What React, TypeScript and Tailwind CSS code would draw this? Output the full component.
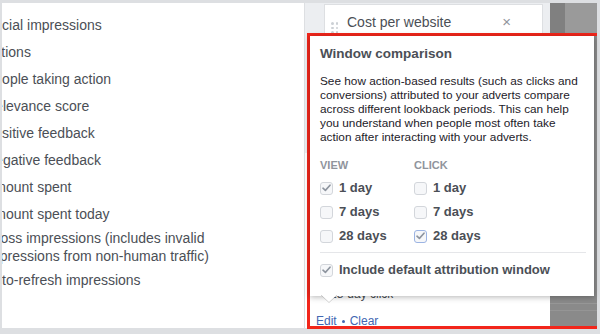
import React from 'react';

const leftItems = [
  'Social reach',
  'Social impressions',
  'Actions',
  'People taking action',
  'Relevance score',
  'Positive feedback',
  'Negative feedback',
  'Amount spent',
  'Amount spent today',
  'Gross impressions (includes invalid impressions from non-human traffic)',
  'Auto-refresh impressions',
];

const Check = () => (
  <svg width="9" height="8" viewBox="0 0 9 8" fill="none">
    <path d="M1 4.2 L3.4 6.4 L8 1.2" stroke="#8d949e" strokeWidth="1.6" strokeLinecap="round" strokeLinejoin="round" />
  </svg>
);

const Box = ({ checked, focus }: { checked?: boolean; focus?: boolean }) => (
  <span
    className={
      'flex h-[13px] w-[13px] shrink-0 items-center justify-center rounded-[3px] border bg-[#f6f7f9] ' +
      (focus ? 'border-[#9cb4e3]' : 'border-[#d3d6db]')
    }
  >
    {checked && <Check />}
  </span>
);

const Option = ({ label, checked, focus }: { label: string; checked?: boolean; focus?: boolean }) => (
  <label className="flex h-[24px] items-center gap-[6px] text-[13px] font-bold text-[#4b4f56]">
    <Box checked={checked} focus={focus} />
    {label}
  </label>
);

export default function App() {
  return (
    <div className="relative h-[334px] w-[600px] overflow-hidden bg-[#dddfe2] font-['Liberation_Sans',Arial,sans-serif]">
      <div className="flex h-full pt-[3px] pb-[6px]">
        {/* column list */}
        <div className="ml-[2px] w-[302px] overflow-hidden bg-white">
          <ul className="-ml-[17px] -mt-[18px] w-[320px]">
            {leftItems.map((t) => (
              <li
                key={t}
                className="flex min-h-[27px] items-center py-[2px] pr-[96px] text-[14px] leading-[17.5px] text-[#4b4f56]"
              >
                {t}
              </li>
            ))}
          </ul>
        </div>

        {/* selected columns */}
        <div className="ml-[1px] flex w-[245px] flex-col bg-white">
          <div className="h-[150px] bg-[#eceef1] pt-[1px] pl-[19px] pr-[7px]">
            <div className="flex border border-[#dddfe2] bg-white pt-[8px] pb-[8px] pl-[6px] pr-[31px]">
              <div className="mt-[9px] grid h-[12px] grid-cols-2 gap-x-[2px] gap-y-[2px]">
                {[0, 1, 2, 3, 4, 5].map((i) => (
                  <span key={i} className="h-[2.5px] w-[2.5px] rounded-full bg-[#ccd0d5]" />
                ))}
              </div>
              <div className="ml-[9px] flex-1 text-[14px] leading-[18px] text-[#4b4f56]">
                Cost per website registrations completed
              </div>
              <span className="text-[15px] leading-[18px] text-[#90949c]">×</span>
            </div>
          </div>
          <div className="flex-1 pl-[11px]">
            <div className="mt-[134px] pl-[14px] text-[12px] leading-[14px] text-[#4b4f56]">28-day click</div>
            <div className="mt-[13px] flex items-center gap-[5px] text-[12px] leading-[14px] text-[#4267b2]">
              <span>Edit</span>
              <span className="h-[3px] w-[3px] rounded-full bg-[#4267b2]" />
              <span>Clear</span>
            </div>
          </div>
        </div>

        {/* preview edge */}
        <div className="flex w-[47px] flex-col bg-[#8a8a8a]">
          <div className="flex h-[32px]">
            <div className="w-[15px] bg-[#808080]" />
            <div className="flex-1 bg-[#9a9a9a]" />
          </div>
          <div className="mt-[268px] h-px bg-[#979797]" />
          <div className="mt-[6px] h-px bg-[#959595]" />
        </div>
      </div>

      {/* highlight box */}
      <div className="absolute left-[307px] top-[33px] h-[296px] w-[290px] border-[3px] border-r-0 border-[#f2261b]" />

      {/* popover */}
      <div className="absolute left-[310px] top-[36px] h-[260px] w-[284px] bg-white px-[10px] pt-[9px] shadow-[0_1px_6px_rgba(0,0,0,0.3)]">
        <div className="text-[13.5px] font-bold leading-[18px] text-[#4b4f56]">Window comparison</div>
        <p className="mt-[11px] whitespace-nowrap text-[11.8px] leading-[14px] text-[#1d2129]">
          See how action-based results (such as clicks and
          <br />
          conversions) attributed to your adverts compare
          <br />
          across different lookback periods. This can help
          <br />
          you understand when people most often take
          <br />
          action after interacting with your adverts.
        </p>
        <div className="mt-[15px] grid grid-cols-[94px_1fr]">
          <div>
            <div className="mb-[4px] text-[11px] font-bold leading-[13px] text-[#90949c]">VIEW</div>
            <Option label="1 day" checked />
            <Option label="7 days" />
            <Option label="28 days" />
          </div>
          <div>
            <div className="mb-[4px] text-[11px] font-bold leading-[13px] text-[#90949c]">CLICK</div>
            <Option label="1 day" />
            <Option label="7 days" />
            <Option label="28 days" checked focus />
          </div>
        </div>
        <div className="mt-[4px] mr-[-2px] border-t border-[#e5e6e9] pt-[5px]">
          <Option label="Include default attribution window" checked />
        </div>
        <svg className="absolute left-[11px] top-[259px]" width="16" height="9" viewBox="0 0 16 9">
          <path d="M0 0 L8 7.5 L16 0 Z" fill="#fff" />
          <path d="M0 0 L8 7.5 L16 0" fill="none" stroke="rgba(0,0,0,0.18)" strokeWidth="1" />
        </svg>
      </div>
    </div>
  );
}
